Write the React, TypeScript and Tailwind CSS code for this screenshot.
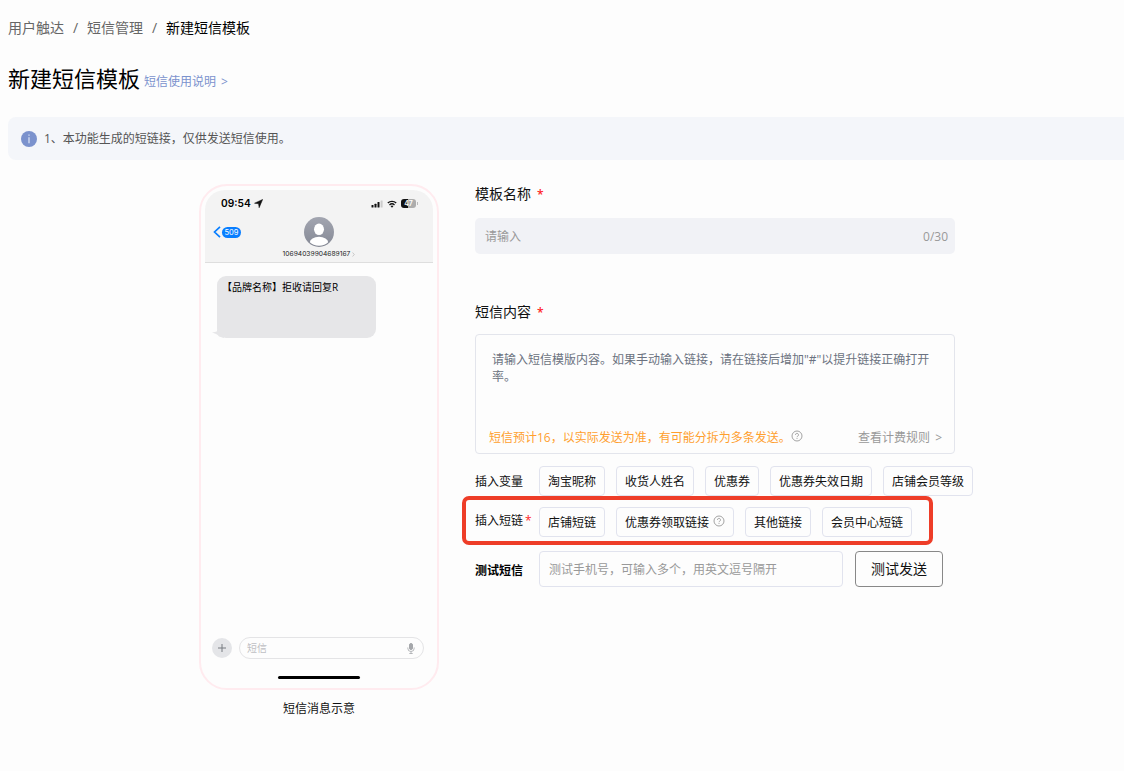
import clsx from "clsx";

const VARIABLES = ["淘宝昵称", "收货人姓名", "优惠券", "优惠券失效日期", "店铺会员等级"];

const SHORT_LINKS = [
    { label: "店铺短链" },
    { label: "优惠券领取链接", help: true },
    { label: "其他链接" },
    { label: "会员中心短链" },
];

const HelpIcon = ({ className }: { className?: string }) => (
    <svg viewBox="0 0 12 12" fill="none" stroke="#999" className={clsx("size-3 shrink-0", className)}>
        <circle cx="6" cy="6" r="5" strokeWidth="0.9" />
        <path d="M4.5 4.9a1.5 1.5 0 1 1 2.3 1.2c-.5.35-.8.6-.8 1.1" strokeWidth="0.9" />
        <path d="M6 8v.9" strokeWidth="0.9" />
    </svg>
);

const Chip = ({ label, help }: { label: string; help?: boolean }) => (
    <button className="flex items-center h-[30px] px-2 pt-[2px] border border-[#e1e3ee] rounded text-xs whitespace-nowrap text-[#111]">
        {label}
        {help && <HelpIcon className="ml-1 -mt-1" />}
    </button>
);

const StatusBar = () => (
    <div className="flex items-center justify-between h-[27px] pl-4 pr-[15px]">
        <div className="flex items-center gap-[3px] text-[10.2px] leading-none font-semibold text-black font-['Inter','Liberation_Sans',sans-serif]">
            09:54
            <svg viewBox="0 0 10 10" className="size-[9px]">
                <path d="M9.6.5.6 4.7l4.500.6.6 4.400z" fill="#111" stroke="#111" strokeWidth=".6" strokeLinejoin="round" />
            </svg>
        </div>
        <div className="flex items-center">
            <svg viewBox="0 0 12 8" className="w-3 h-2">
                <rect x="0.5" y="5" width="2" height="2.6" rx=".5" fill="#111" />
                <rect x="3.5" y="3.7" width="2" height="3.9" rx=".5" fill="#111" />
                <rect x="6.5" y="2" width="2" height="5.6" rx=".5" fill="#111" />
                <rect x="9.6" y="0.4" width="2" height="7.2" rx=".5" fill="#ccc" />
            </svg>
            <svg viewBox="0 0 10 8" className="w-[10px] h-2 ml-1" fill="none" stroke="#111">
                <path d="M.8 3a6.2 6.2 0 0 1 8.4 0M2.5 4.9a3.7 3.7 0 0 1 5 0" strokeWidth="1.4" />
                <path d="M5 7.8 3.6 6.3a2 2 0 0 1 2.8 0z" fill="#111" stroke="none" />
            </svg>
            <div className="flex items-center ml-1">
                <div className="flex items-center justify-center w-[15px] h-[9px] rounded-[3px] bg-linear-to-r from-[#111] from-45% to-[#adadad] to-45% text-[7px] leading-none font-semibold text-white font-['Inter',sans-serif]">
                    47
                </div>
                <div className="w-px h-[3px] ml-px bg-[#bbb]" />
            </div>
        </div>
    </div>
);

const PhonePreview = () => (
    <div className="flex flex-col items-center w-[240px]">
        <div className="flex flex-col w-full h-[506px] pt-1 px-1 border-2 border-[#ffebef] rounded-[28px]">
            <div className="flex flex-col flex-1 rounded-t-[20px] overflow-hidden">
                {/* Header */}
                <div className="h-[73px] bg-[#f3f3f3] border-b border-[#dedede]">
                    <StatusBar />
                    <div className="grid grid-cols-[1fr_auto_1fr] items-start pl-2 pr-[9px]">
                        <div className="flex items-center gap-px pt-[9px]">
                            <svg viewBox="0 0 8 12" className="w-2 h-3" fill="none" stroke="#087eff" strokeWidth="1.7">
                                <path d="M7 .8 1.5 6 7 11.2" />
                            </svg>
                            <span className="flex items-center justify-center w-[19px] h-[11px] pt-px rounded-full bg-[#087eff] text-white text-[7.5px] leading-none font-['Inter',sans-serif]">
                                509
                            </span>
                        </div>
                        <svg viewBox="0 0 30 30" className="size-[30px]">
                            <defs>
                                <linearGradient id="avatar" x1="0" y1="0" x2="0" y2="1">
                                    <stop offset="0" stopColor="#a2a5b0" />
                                    <stop offset="1" stopColor="#858995" />
                                </linearGradient>
                                <clipPath id="face">
                                    <circle cx="15" cy="15" r="13.8" />
                                </clipPath>
                            </defs>
                            <circle cx="15" cy="15" r="15" fill="url(#avatar)" />
                            <g fill="#fff" clipPath="url(#face)">
                                <ellipse cx="15" cy="12.3" rx="5" ry="5.8" />
                                <ellipse cx="15" cy="25.5" rx="9.2" ry="5.7" />
                            </g>
                        </svg>
                    </div>
                    <div className="flex items-center justify-center mt-[3px] text-[6.7px] leading-[8px] text-[#222] font-['Inter',sans-serif]">
                        10694039904689167
                        <svg viewBox="0 0 3 6" className="w-[3px] h-[5px] ml-[2px]" fill="none" stroke="#aaa" strokeWidth=".7">
                            <path d="m.4.6 2 2.4-2 2.4" />
                        </svg>
                    </div>
                </div>

                {/* Message */}
                <div className="relative w-[159px] h-[62px] mt-[13px] ml-3 px-[5px] pt-[3px] rounded-[9px] bg-[#e6e6e8] text-[10px] leading-4 whitespace-nowrap text-black">
                    【品牌名称】拒收请回复R
                    <svg viewBox="0 0 12 8" className="absolute -left-[5px] bottom-0 w-3 h-2" fill="#e6e6e8">
                        <path d="M5 0v1.2C3.8 2 2 2.3 0 2.4c3 .9 5.500 1.700 7 4.200L12 8V0z" />
                    </svg>
                </div>

                {/* Composer */}
                <div className="flex items-center gap-[7px] mt-auto pl-[7px] pr-[9px]">
                    <div className="flex items-center justify-center size-5 rounded-full bg-[#e4e5e8]">
                        <svg viewBox="0 0 8 8" className="size-2" stroke="#777a80" strokeWidth="1">
                            <path d="M4 0v8M0 4h8" />
                        </svg>
                    </div>
                    <div className="flex flex-1 items-center justify-between h-[22px] pl-[7px] pr-2 border border-[#e4e4e6] rounded-full text-[10px] text-[#bfbfc3]">
                        短信
                        <svg viewBox="0 0 8 11" className="w-2 h-[11px]" fill="none" stroke="#a5a7ab">
                            <rect x="2.500" y=".5" width="3" height="6" rx="1.500" fill="#a5a7ab" />
                            <path d="M.8 4.500v.8a3.200 3.200 0 0 0 6.400 0v-.8M4 8.500v2M2.300 10.500h3.400" strokeWidth=".8" />
                        </svg>
                    </div>
                </div>
                <div className="w-[82px] h-[3px] mx-auto mt-[17px] mb-[9px] rounded-full bg-black" />
            </div>
        </div>
        <p className="mt-[10px] text-xs leading-[18px]">短信消息示意</p>
    </div>
);

const FieldLabel = ({ children }: { children: string }) => (
    <div className="flex items-center h-5 text-sm leading-5 text-[#111]">
        {children}
        <span className="ml-[6px] mt-px text-xs font-semibold text-[#ff1f1f]">*</span>
    </div>
);

export default function App() {
    return (
        <div className="min-h-[771px] pl-2 overflow-hidden bg-[#fdfdfd] text-[#111] font-['Open_Sans','Noto_Sans_CJK_SC',sans-serif]">
            {/* Breadcrumb */}
            <nav className="flex items-center gap-[9px] h-5 mt-[18px] text-sm leading-5 text-[#666]">
                <span>用户触达</span>
                <span className="w-[5px]">/</span>
                <span>短信管理</span>
                <span className="w-[5px]">/</span>
                <span className="text-black">新建短信模板</span>
            </nav>

            <div className="flex items-center h-8 mt-6">
                <h1 className="text-[22px] leading-8 text-black">新建短信模板</h1>
                <a className="ml-1 mt-2 text-xs leading-5 text-[#7b92cd]">
                    短信使用说明<span className="ml-[5px]">&gt;</span>
                </a>
            </div>

            {/* Notice */}
            <div className="flex items-center h-[43px] mt-[23px] pl-[13px] rounded-l-lg bg-[#f4f6fa] text-xs text-[#555]">
                <svg viewBox="0 0 16 16" className="size-4 mr-[7px]">
                    <circle cx="8" cy="8" r="8" fill="#7b92cd" />
                    <path d="M8 3.500v1.300M8 6.300v6" stroke="#e8edfa" strokeWidth="1.100" />
                </svg>
                1、本功能生成的短链接，仅供发送短信使用。
            </div>

            <div className="flex mt-6">
                <div className="ml-[191px]">
                    <PhonePreview />
                </div>

                <div className="w-[480px] ml-9">
                    <FieldLabel>模板名称</FieldLabel>
                    <div className="flex items-center justify-between h-9 mt-[14px] pt-[2px] pl-[10px] pr-[7px] rounded-[5px] bg-[#f1f2f6] text-xs text-[#999]">
                        <span>请输入</span>
                        <span>0/30</span>
                    </div>

                    <div className="mt-12">
                        <FieldLabel>短信内容</FieldLabel>
                    </div>
                    <div className="flex flex-col justify-between h-[120px] mt-3 pt-4 pb-[5px] pl-[13px] pr-3 border border-[#e3e5ec] rounded text-xs">
                        <p className="pl-[3px] pr-[11px] leading-[17px] text-[#6b7280]">
                            请输入短信模版内容。如果手动输入链接，请在链接后增加"#"以提升链接正确打开率。
                        </p>
                        <div className="flex items-center leading-5">
                            <span className="text-[#ff9f2e]">短信预计16，以实际发送为准，有可能分拆为多条发送。</span>
                            <HelpIcon className="-mt-1" />
                            <a className="ml-auto text-[#999]">
                                查看计费规则<span className="ml-[5px]">&gt;</span>
                            </a>
                        </div>
                    </div>

                    <div className="flex items-center mt-3">
                        <span className="w-16 shrink-0 pt-[2px] text-xs">插入变量</span>
                        <div className="flex gap-[11px]">
                            {VARIABLES.map((label) => (
                                <Chip key={label} label={label} />
                            ))}
                        </div>
                    </div>

                    <div className="relative flex items-center mt-[11px]">
                        <span className="w-16 shrink-0 -mt-[2px] text-xs">
                            插入短链<span className="ml-[2px] text-[#ff1f1f]">*</span>
                        </span>
                        <div className="flex gap-[11px]">
                            {SHORT_LINKS.map((link) => (
                                <Chip key={link.label} {...link} />
                            ))}
                        </div>
                        {/* Highlight frame */}
                        <div className="absolute -left-[13px] -top-[11px] w-[471px] h-[49px] border-4 border-[#ee3d28] rounded-[7px] pointer-events-none" />
                    </div>

                    <div className="flex items-center mt-[14px]">
                        <span className="w-16 shrink-0 pt-[3px] text-xs font-bold text-black">测试短信</span>
                        <div className="flex items-center w-[304px] h-9 pt-[2px] px-[9px] border border-[#e1e3ee] rounded text-xs text-[#999]">
                            测试手机号，可输入多个，用英文逗号隔开
                        </div>
                        <button className="w-[88px] h-9 ml-3 border border-[#888] rounded text-sm text-[#111]">
                            测试发送
                        </button>
                    </div>
                </div>
            </div>
        </div>
    );
}
